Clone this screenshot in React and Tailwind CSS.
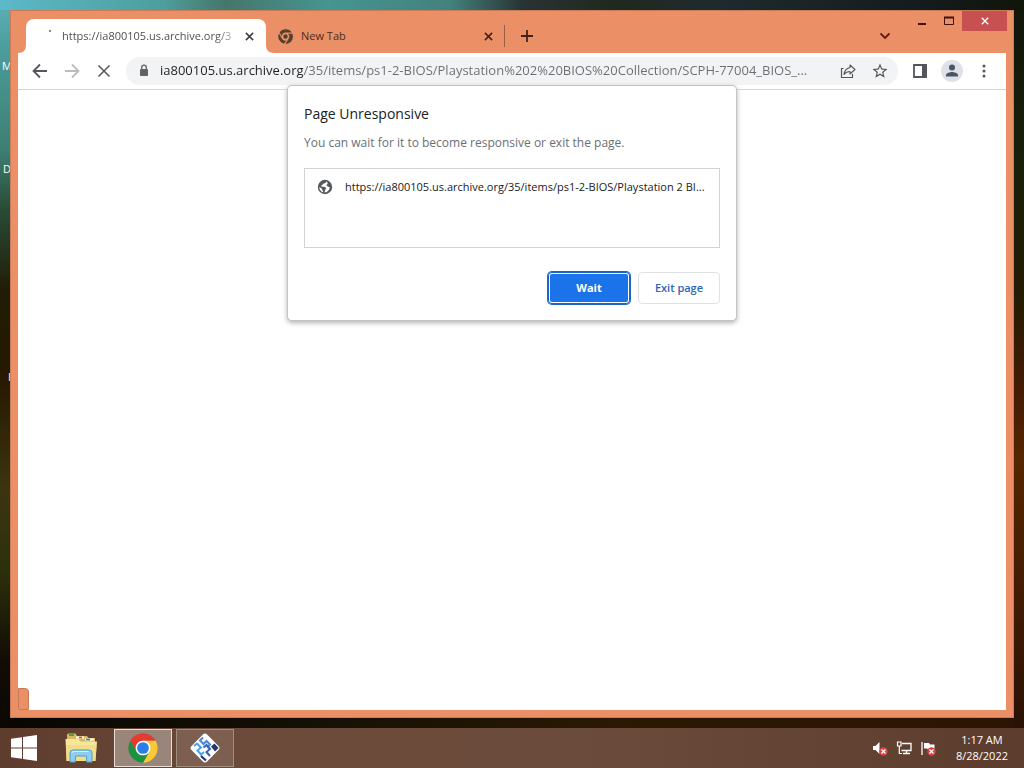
import React from "react";

const Svg = ({ size = 20, box = 24, className = "", children }) => (
  <svg width={size} height={size} viewBox={`0 0 ${box} ${box}`} className={`shrink-0 ${className}`} fill="none" aria-hidden="true">
    {children}
  </svg>
);

const CloseIcon = ({ size }) => (
  <Svg size={size} box={10}>
    <path d="M1 1l8 8M9 1L1 9" stroke="currentColor" strokeWidth="1.7" />
  </Svg>
);

const TOOL_BUTTON = "flex h-7 w-7 shrink-0 items-center justify-center rounded-full text-[#53575b]";

function ChromeMono() {
  return (
    <Svg size={15} box={48}>
      <path d="M24 11H44A24 24 0 0 0 5 10L13 25A11 11 0 0 1 24 11z" fill="#54402f" />
      <path d="M46 15A24 24 0 0 1 24 48L34 31A13 13 0 0 0 32 15z" fill="#54402f" />
      <path d="M19 47A24 24 0 0 1 3 14L13 32A13 13 0 0 0 27 37z" fill="#54402f" />
      <circle cx="24" cy="24" r="7" fill="#54402f" />
    </Svg>
  );
}

function ChromeLogo() {
  return (
    <Svg size={32} box={48}>
      <circle cx="24" cy="24" r="12" fill="#fff" />
      <path d="M24 13H43.05A22 22 0 0 0 4.95 13L14.47 29.5A11 11 0 0 1 24 13z" fill="#e33b2e" />
      <path d="M43.05 13A22 22 0 0 1 24 46L33.53 29.5A11 11 0 0 0 24 13z" fill="#fcc934" />
      <path d="M24 46A22 22 0 0 1 4.95 13L14.47 29.5A11 11 0 0 0 33.53 29.5z" fill="#1e9141" />
      <circle cx="24" cy="24" r="8.8" fill="#2b7de9" />
    </Svg>
  );
}

function ExplorerLogo() {
  return (
    <svg width="34" height="32" viewBox="0 0 34 32" fill="none" aria-hidden="true">
      <path d="M3 3q0-1.500 1.500-1.500h7L13 4h10l1.500 2H31v8H3z" fill="#d9b95c" />
      <path d="M5 3h5" stroke="#3c9b45" strokeWidth="1.800" />
      <path d="M12 5.500h8M21 7.500h9" stroke="#fff" strokeWidth="2" />
      <path d="M15 5.500h3" stroke="#c9483c" strokeWidth="1.500" />
      <path d="M22 7.500h4" stroke="#3a7fc4" strokeWidth="1.500" />
      <path d="M1.500 7h13l2 2.500H33L31.500 29H2.500z" fill="#f6e69b" />
      <path d="M2 13h30.500l-1 16h-29z" fill="#efd97c" opacity=".65" />
      <path d="M6 30V21q0-3 3-3h16q3 0 3 3v9h-5.500v-6h-11v6z" fill="#8fcdf0" stroke="#4b9fd2" />
      <path d="M8 21q0-1.500 1.500-1.500h15" stroke="#d9f1fd" strokeWidth="1.200" />
    </svg>
  );
}

function EmulatorLogo() {
  return (
    <Svg size={32} box={32}>
      <rect x="5" y="5" width="22" height="22" rx="3" transform="rotate(45 16 16)" fill="#fff" />
      <path d="M5 14l3-2.500 4 4-3.500 3 3.500 4 3-2.500" stroke="#4aa3e3" strokeWidth="2" />
      <path d="M14 5.500l-3 3 3.500 3.500 3-3 3.500 3.500-3 3" stroke="#4a86d8" strokeWidth="2" />
      <path d="M14.500 15.500l3-2.500 3.500 4-3.500 3 3.500 4" stroke="#3565b5" strokeWidth="2" />
      <path d="M22 14.500l3.500-3 4 4.500-3.500 3.500z" fill="#20386f" />
      <path d="M12 24l5 4.500" stroke="#20386f" strokeWidth="2.200" />
    </Svg>
  );
}

function TabStrip() {
  return (
    <header className="flex h-[42px] items-end pl-[15px] text-[11px] text-[#4b2c20]">
      <div className="relative flex h-[34px] w-60 shrink items-center rounded-t-lg bg-white pr-[9px] pl-4 text-[#45494d]">
        <svg className="absolute bottom-0 -left-2" width="8" height="8" viewBox="0 0 8 8" aria-hidden="true"><path d="M0 8Q8 8 8 0V8z" fill="#fff" /></svg>
        <svg className="absolute -right-2 bottom-0" width="8" height="8" viewBox="0 0 8 8" aria-hidden="true"><path d="M8 8Q0 8 0 0V8z" fill="#fff" /></svg>
        <Svg size={16} box={16} className="mr-1">
          <circle cx="8" cy="3" r="1" fill="#5f6368" />
        </Svg>
        <span className="min-w-0 flex-1 bg-linear-to-r from-[#45494d] from-88% to-[#45494d]/20 bg-clip-text whitespace-nowrap text-transparent">
          https://ia800105.us.archive.org/3
        </span>
        <button aria-label="Close tab" className="ml-1 flex h-4 w-4 items-center justify-center text-[#3c4043]">
          <CloseIcon size={9} />
        </button>
      </div>
      <div className="flex h-[34px] w-[238px] shrink items-center pr-2 pl-3">
        <ChromeMono />
        <span className="ml-2 flex-1">New Tab</span>
        <button aria-label="Close New Tab" className="flex h-4 w-4 items-center justify-center text-[#40211a]">
          <CloseIcon size={9} />
        </button>
      </div>
      <span className="mb-[6px] h-[22px] w-px bg-[#9c5c41]" />
      <button aria-label="New tab" className="ml-2 flex h-[34px] w-7 items-center justify-center text-[#40211a]">
        <Svg size={12} box={12}><path d="M6 0v12M0 6h12" stroke="currentColor" strokeWidth="1.800" /></Svg>
      </button>
      <button aria-label="Search tabs" className="ml-auto flex h-[34px] w-7 items-center justify-center text-[#5c1a12]">
        <Svg size={10} box={10}><path d="M.5 2.500L5 7l4.500-4.500" stroke="currentColor" strokeWidth="1.800" /></Svg>
      </button>
      <div className="mr-[6px] ml-[9px] flex h-5 self-start text-[#40110c]">
        <button aria-label="Minimize" className="flex w-7 items-center justify-center">
          <Svg size={12} box={12}><path d="M2 9h8" stroke="currentColor" strokeWidth="2" /></Svg>
        </button>
        <button aria-label="Maximize" className="flex w-[26px] items-center justify-center">
          <Svg size={12} box={12}><path d="M1.500 2.500h9v7h-9z" stroke="currentColor" /><path d="M1 2.500h10" stroke="currentColor" strokeWidth="2" /></Svg>
        </button>
        <button aria-label="Close window" className="flex w-[45px] items-center justify-center bg-[#c75050] text-white">
          <CloseIcon size={8} />
        </button>
      </div>
    </header>
  );
}

function Toolbar() {
  return (
    <div className="flex h-[37px] items-center border-b border-[#d5d7da] bg-white px-2">
      <div className="flex gap-1">
        <button aria-label="Back" className={TOOL_BUTTON}>
          <Svg size={16} box={16}><path d="M15 8H2M8 1.500L1.500 8 8 14.500" stroke="currentColor" strokeWidth="1.800" /></Svg>
        </button>
        <button aria-label="Forward" disabled className="flex h-7 w-7 items-center justify-center text-[#babcbe]">
          <Svg size={16} box={16}><path d="M1 8h13M8 1.500L14.500 8 8 14.500" stroke="currentColor" strokeWidth="1.800" /></Svg>
        </button>
        <button aria-label="Stop loading" className={TOOL_BUTTON}>
          <Svg size={14} box={14}><path d="M1.500 1.500l11 11M12.500 1.500l-11 11" stroke="currentColor" strokeWidth="1.500" /></Svg>
        </button>
      </div>
      <div className="mx-2 flex h-7 min-w-0 flex-1 items-center rounded-full bg-[#f1f3f4] pr-1 pl-[10px]">
        <Svg size={16} box={16} className="text-[#5f6368]">
          <rect x="4" y="6" width="8" height="7" rx="1" fill="currentColor" />
          <path d="M5.700 6V4.500a2.300 2.300 0 0 1 4.600 0V6" stroke="currentColor" strokeWidth="1.300" />
        </Svg>
        <input
          aria-label="Address"
          className="ml-2 min-w-0 flex-1 bg-linear-to-r from-[#202124] from-[143px] to-[#6a6e73] to-[143px] bg-clip-text text-[13px] text-transparent outline-none"
          defaultValue="ia800105.us.archive.org/35/items/ps1-2-BIOS/Playstation%202%20BIOS%20Collection/SCPH-77004_BIOS_..."
        />
        <div className="flex gap-1">
          <button aria-label="Share this page" className={TOOL_BUTTON}>
            <Svg size={16} box={16}>
              <path d="M3.500 5.500H1.500v9h11V11" stroke="currentColor" strokeWidth="1.200" />
              <path d="M10 2l5 4.500-5 4.500V8.500c-3 0-4.500 1-6 3 .3-3.500 2-6 6-7z" stroke="currentColor" strokeWidth="1.100" strokeLinejoin="round" />
            </Svg>
          </button>
          <button aria-label="Bookmark this tab" className={TOOL_BUTTON}>
            <Svg size={18} box={24}>
              <path d="M22 9.240l-7.190-.62L12 2 9.190 8.630 2 9.240l5.460 4.730L5.820 21 12 17.270 18.180 21l-1.630-7.030L22 9.240zM12 15.400l-3.760 2.270 1-4.280-3.320-2.880 4.380-.38L12 6.100l1.710 4.040 4.380.38-3.320 2.880 1 4.280L12 15.400z" fill="currentColor" />
            </Svg>
          </button>
        </div>
      </div>
      <div className="flex gap-1">
        <button aria-label="Side panel" className={TOOL_BUTTON}>
          <Svg size={16} box={16}>
            <path d="M2 2h12v12H2z" stroke="currentColor" strokeWidth="1.800" />
            <path d="M10 1.500h5v13h-5z" fill="currentColor" />
          </Svg>
        </button>
        <button aria-label="Profile" className="flex h-7 w-7 items-center justify-center">
          <Svg size={22} box={22}>
            <circle cx="11" cy="11" r="11" fill="#dfe1e8" />
            <circle cx="11" cy="7.500" r="3" fill="#4c5566" />
            <path d="M5 16.500v-1.500c0-2 4-3 6-3s6 1 6 3v1.500z" fill="#4c5566" />
          </Svg>
        </button>
        <button aria-label="Menu" className={TOOL_BUTTON}>
          <Svg size={16} box={16}>
            <circle cx="8" cy="3" r="1.500" fill="currentColor" />
            <circle cx="8" cy="8" r="1.500" fill="currentColor" />
            <circle cx="8" cy="13" r="1.500" fill="currentColor" />
          </Svg>
        </button>
      </div>
    </div>
  );
}

function UnresponsiveDialog() {
  return (
    <section
      role="dialog"
      aria-labelledby="dialog-title"
      className="absolute -top-1 left-1/2 w-[448px] max-w-full -translate-x-1/2 rounded bg-white p-4 shadow-[0_0_0_1px_#c3c4c6,0_2px_5px_1px_#0000004d]"
    >
      <h1 id="dialog-title" className="text-[14px] leading-6 text-[#202124]">Page Unresponsive</h1>
      <p className="mt-[5px] text-[12px] leading-6 text-[#6b6f74]">You can wait for it to become responsive or exit the page.</p>
      <ul className="mt-[13px] h-20 border border-[#d2d3d4] text-[11px] text-[#202124]">
        <li className="flex h-9 items-center gap-3 pl-3">
          <Svg size={16} box={16}>
            <circle cx="8" cy="8" r="7.200" fill="#55585c" />
            <path d="M9.500 2.200c-.3 1.600-1.200 2-2.700 2.200-1 .1-.8 1.500-1.800 1.700-.8.200-1 1.500 0 1.700 1.800.3 3.600-.2 4 1.200.3 1-.8 1.200-.8 2.200-.1 1-.8 1.300-.8 2.300 3-.1 5.300-2.500 5.400-5.400-1 .3-1.500-.7-2.400-.9-1-.2-1.300-1.100-.4-1.600.9-.4.800-1.500.1-2.500zM2.300 8.200c1 .2 1.700.8 2.500 1.600.6.600.4 1.600 1.200 2.300.3.300.2.900 0 1.200-2.200-.8-3.600-2.800-3.700-5.100z" fill="#fff" />
          </Svg>
          <span className="min-w-0 overflow-hidden whitespace-nowrap">https://ia800105.us.archive.org/35/items/ps1-2-BIOS/Playstation 2 BI...</span>
        </li>
      </ul>
      <div className="mt-6 flex justify-end gap-2 text-[11px]">
        <button className="h-8 w-[82px] rounded bg-[#1a73e8] font-bold text-white shadow-[0_0_0_1px_#1b66c9,inset_0_0_0_1px_#1b66c9,inset_0_0_0_2px_#fff]">Wait</button>
        <button className="h-8 w-[82px] rounded border border-[#dfe1e4] bg-white font-semibold text-[#2a65c0]">Exit page</button>
      </div>
    </section>
  );
}

const RedCross = () => (
  <>
    <circle cx="11.500" cy="11.500" r="4.300" fill="#d84343" />
    <path d="M9.500 9.500l4 4M13.500 9.500l-4 4" stroke="#fff" strokeWidth="1.300" />
  </>
);

function Taskbar() {
  return (
    <footer className="flex h-10 items-center bg-[linear-gradient(90deg,#5e3d2e,#6c4b3b_25%,#6a4a3a_60%,#5c3c2c)] text-white">
      <button aria-label="Start" className="flex h-10 w-12 items-center justify-center">
        <svg width="26" height="26" viewBox="0 0 26 26" fill="#fff" aria-hidden="true">
          <path d="M0 3.700L11 2.200V12.500H0zM12 2L26 0V12.500H12zM0 13.500H11V23.800L0 22.300zM12 13.500H26V26L12 24z" />
        </svg>
      </button>
      <button aria-label="File Explorer" className="ml-1 flex h-10 w-[58px] items-center justify-center"><ExplorerLogo /></button>
      <button aria-label="Google Chrome" className="ml-1 flex h-[38px] w-[58px] items-center justify-center border border-[#e9dfd8] bg-[#9a857b]"><ChromeLogo /></button>
      <button aria-label="PCSX2" className="ml-1 flex h-[38px] w-[58px] items-center justify-center border border-[#a18c80] bg-[#7c5f50]"><EmulatorLogo /></button>
      <div className="ml-auto flex items-center gap-2 pr-4">
        <button aria-label="Volume muted">
          <Svg size={16} box={16}>
            <path d="M1 6h2.500L7.500 2v12l-4-4H1z" fill="#fff" />
            <RedCross />
          </Svg>
        </button>
        <button aria-label="Network">
          <Svg size={16} box={16}>
            <path d="M6 3.500h9v7H5.500M10.500 10.500v3M7 13.500h7" stroke="#fff" strokeWidth="1.300" />
            <path d="M1.500 2h3.500v4h-3.500zM3.300 6v7.500H6" stroke="#fff" strokeWidth="1.200" />
          </Svg>
        </button>
        <button aria-label="Action Center">
          <Svg size={16} box={16}>
            <path d="M2 2v13" stroke="#fff" strokeWidth="1.300" />
            <path d="M4 3h5l1 1.500h4.500v5H8L7 8.500H4z" fill="#fff" />
            <RedCross />
          </Svg>
        </button>
        <button className="ml-3 text-center text-[11px] leading-4">
          <time className="block">1:17 AM</time>
          <time className="block">8/28/2022</time>
        </button>
      </div>
    </footer>
  );
}

export default function App() {
  return (
    <main className="relative isolate flex min-h-screen flex-col bg-[linear-gradient(90deg,#5cb9c8,#4d9e9c_16%,#46766b_22%,#459591_32%,#43817e_44%,#293333_51%,#20291e_60%,#202a2e_70%,#141b1e_90%,#101509),linear-gradient(#5faeb8,#479a96_60px,#3e7f73_150px,#294b35_210px,#221c06_290px,#241800_370px,#3d3410_490px,#2d300c_570px,#130c04_660px,#0b0702),linear-gradient(#101609,#192009_170px,#231b03_290px,#451b05_390px,#542600_460px,#421b04_600px,#291104),linear-gradient(90deg,#080703,#151006_30%,#2a1903_60%,#2c1405)] bg-[size:100%_10px,10px_728px,10px_728px,100%_20px] bg-[position:0_0,0_0,100%_0,0_718px] bg-no-repeat font-['Open_Sans','Noto_Sans',sans-serif]">
      <span className="absolute top-[58px] left-[2px] -z-10 text-[11px] text-white">M</span>
      <span className="absolute top-[161px] left-[3px] -z-10 text-[11px] text-white">D</span>
      <span className="absolute top-[369px] left-[8px] -z-10 text-[11px] text-white">I</span>
      <div className="m-[10px] flex flex-1 flex-col border border-[#c97b58] bg-[#eb9066]">
        <TabStrip />
        <div className="mx-[7px] mb-[7px] flex flex-1 flex-col bg-white">
          <Toolbar />
          <div className="relative flex-1">
            <UnresponsiveDialog />
            <span className="absolute bottom-0 left-0 h-[22px] w-[11px] rounded-tr border border-[#c97b58] bg-[#eb9066]" />
          </div>
        </div>
      </div>
      <Taskbar />
    </main>
  );
}
